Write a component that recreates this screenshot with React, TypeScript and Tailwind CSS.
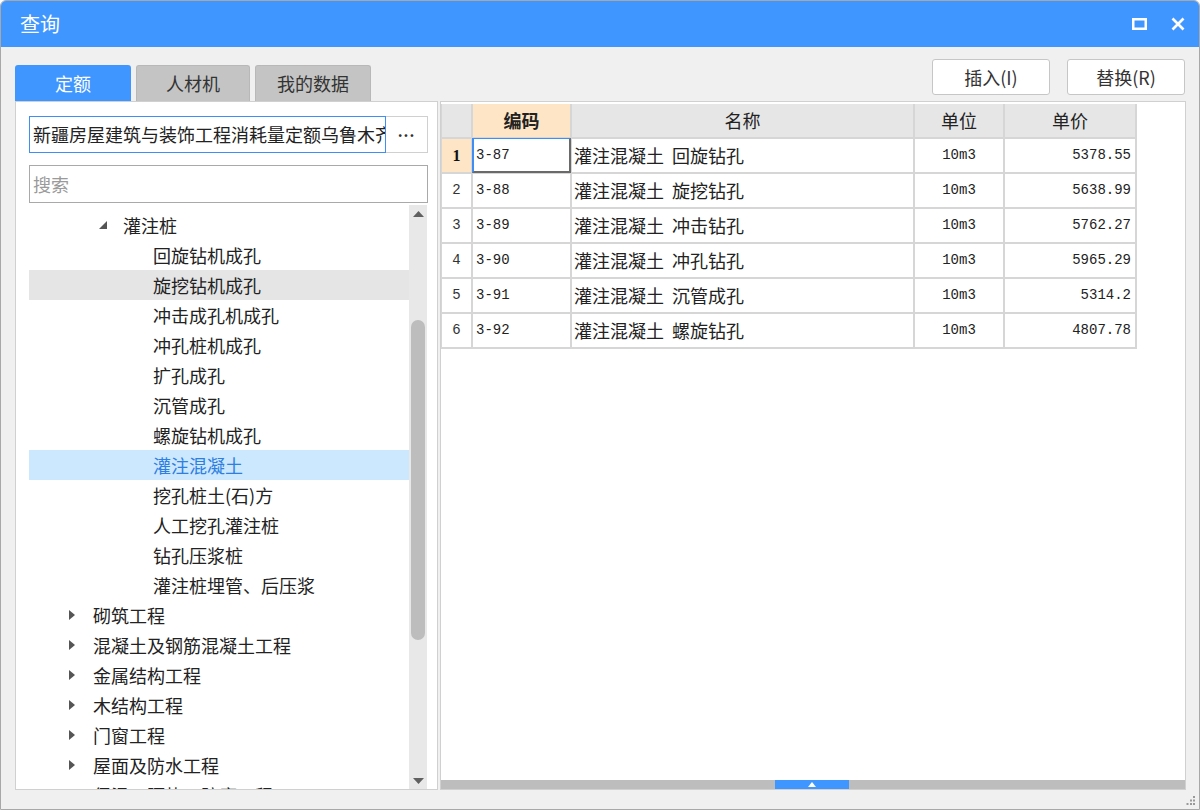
import React from "react";

const CJK = "font-['Microsoft_YaHei','Noto_Sans_CJK_SC',sans-serif]";
const CELL = "font-['Liberation_Mono','Noto_Sans_CJK_SC',monospace]";

type Node = { label: string; level: 0 | 1 | 2; expanded?: boolean; hover?: boolean; selected?: boolean };

const TREE: Node[] = [
  { label: "灌注桩", level: 1, expanded: true },
  { label: "回旋钻机成孔", level: 2 },
  { label: "旋挖钻机成孔", level: 2, hover: true },
  { label: "冲击成孔机成孔", level: 2 },
  { label: "冲孔桩机成孔", level: 2 },
  { label: "扩孔成孔", level: 2 },
  { label: "沉管成孔", level: 2 },
  { label: "螺旋钻机成孔", level: 2 },
  { label: "灌注混凝土", level: 2, selected: true },
  { label: "挖孔桩土(石)方", level: 2 },
  { label: "人工挖孔灌注桩", level: 2 },
  { label: "钻孔压浆桩", level: 2 },
  { label: "灌注桩埋管、后压浆", level: 2 },
  { label: "砌筑工程", level: 0 },
  { label: "混凝土及钢筋混凝土工程", level: 0 },
  { label: "金属结构工程", level: 0 },
  { label: "木结构工程", level: 0 },
  { label: "门窗工程", level: 0 },
  { label: "屋面及防水工程", level: 0 },
  { label: "保温、隔热、防腐工程", level: 0 },
];

const ROWS = [
  { code: "3-87", name: "灌注混凝土  回旋钻孔", unit: "10m3", price: "5378.55" },
  { code: "3-88", name: "灌注混凝土  旋挖钻孔", unit: "10m3", price: "5638.99" },
  { code: "3-89", name: "灌注混凝土  冲击钻孔", unit: "10m3", price: "5762.27" },
  { code: "3-90", name: "灌注混凝土  冲孔钻孔", unit: "10m3", price: "5965.29" },
  { code: "3-91", name: "灌注混凝土  沉管成孔", unit: "10m3", price: "5314.2" },
  { code: "3-92", name: "灌注混凝土  螺旋钻孔", unit: "10m3", price: "4807.78" },
];

function TreeRow({ node }: { node: Node }) {
  const bg = node.selected ? "bg-[#cce8ff]" : node.hover ? "bg-[#e5e5e5]" : "";
  const color = node.selected ? "text-[#2f7fe0]" : "text-[#222]";
  return (
    <div className={`h-[30px] shrink-0 flex items-center ${bg}`}>
      {node.level === 0 && (
        <>
          <div className="w-[52px] shrink-0 flex justify-end pr-[6px]">
            <svg width="6" height="10" viewBox="0 0 6 10">
              <path d="M0 0 L6 5 L0 10 Z" fill="#555" />
            </svg>
          </div>
          <span className={`text-[18px] ${color} whitespace-nowrap pl-[12px]`}>{node.label}</span>
        </>
      )}
      {node.level === 1 && (
        <>
          <div className="w-[80px] shrink-0 flex justify-end pr-[2px]">
            <svg width="8" height="8" viewBox="0 0 8 8">
              <path d="M8 0 L8 8 L0 8 Z" fill="#555" />
            </svg>
          </div>
          <span className={`text-[18px] ${color} whitespace-nowrap pl-[14px]`}>{node.label}</span>
        </>
      )}
      {node.level === 2 && (
        <span className={`text-[18px] ${color} whitespace-nowrap pl-[124px]`}>{node.label}</span>
      )}
    </div>
  );
}

export default function App() {
  return (
    <div className={`w-[1200px] h-[810px] flex flex-col bg-[#f0f0f0] border border-[#a8a8a8] rounded-t-[6px] overflow-hidden ${CJK}`}>
      {/* title bar */}
      <div className="h-[46px] shrink-0 bg-[#4096ff] flex items-center justify-between pl-[19px] pr-[14px]">
        <span className="text-white text-[20px]">查询</span>
        <div className="flex items-center gap-[24px]">
          <svg width="15" height="12" viewBox="0 0 15 12">
            <rect x="1.25" y="1.25" width="12.5" height="9.5" fill="none" stroke="white" strokeWidth="2.5" />
          </svg>
          <svg width="14" height="14" viewBox="0 0 14 14">
            <path d="M1.5 1.5 L12.5 12.5 M12.5 1.5 L1.5 12.5" stroke="white" strokeWidth="2.6" />
          </svg>
        </div>
      </div>

      {/* toolbar */}
      <div className="h-[54px] shrink-0 flex items-end justify-between px-[14px]">
        <div className="flex gap-[5px]">
          <div className="w-[116px] h-[36px] rounded-t-[3px] bg-[#4096ff] text-white text-[18px] flex items-center justify-center">定额</div>
          <div className="w-[114px] h-[36px] rounded-t-[3px] bg-[#c4c4c4] border border-b-0 border-[#b8b8b8] text-[#333] text-[18px] flex items-center justify-center">人材机</div>
          <div className="w-[116px] h-[36px] rounded-t-[3px] bg-[#c4c4c4] border border-b-0 border-[#b8b8b8] text-[#333] text-[18px] flex items-center justify-center">我的数据</div>
        </div>
        <div className="flex gap-[17px] mb-[6px]">
          <button className="w-[118px] h-[36px] bg-white border border-[#c6c6c6] rounded-[3px] text-[18px] text-[#333]">插入(I)</button>
          <button className="w-[118px] h-[36px] bg-white border border-[#c6c6c6] rounded-[3px] text-[18px] text-[#333]">替换(R)</button>
        </div>
      </div>

      {/* content */}
      <div className="h-[689px] shrink-0 flex gap-[2px] pl-[14px]">
        {/* left panel */}
        <div className="w-[423px] bg-white border border-[#d0d0d0] flex flex-col pt-[14px] pl-[13px] pr-[9px] overflow-hidden">
          <div className="h-[37px] shrink-0 flex">
            <div className="w-[357px] border border-[#3f8ef5] flex items-center pl-[3px] overflow-hidden">
              <span className="text-[18px] text-[#222] whitespace-nowrap">新疆房屋建筑与装饰工程消耗量定额乌鲁木齐</span>
            </div>
            <div className="flex-1 border border-l-0 border-[#d0d0d0] flex items-center justify-center">
              <span className="text-[#333] text-[15px] font-bold tracking-[1px] -mt-[6px]">...</span>
            </div>
          </div>
          <div className="h-[38px] shrink-0 mt-[12px] border border-[#a9a9a9] flex items-center pl-[3px]">
            <span className="text-[18px] text-[#9a9a9a]">搜索</span>
          </div>
          <div className="flex-1 flex mt-[2px] min-h-0">
            <div className="w-[380px] flex flex-col pt-[5px] overflow-hidden">
              {TREE.map((n, i) => (
                <TreeRow key={i} node={n} />
              ))}
            </div>
            <div className="w-[18px] bg-[#e8e8e8] flex flex-col items-center">
              <svg className="mt-[6px]" width="11" height="6" viewBox="0 0 11 6">
                <path d="M0 6 L5.5 0 L11 6 Z" fill="#606060" />
              </svg>
              <div className="w-[14px] h-[320px] mt-[103px] rounded-full bg-[#bdbdbd]" />
              <div className="flex-1" />
              <svg className="mb-[5px]" width="11" height="6" viewBox="0 0 11 6">
                <path d="M0 0 L11 0 L5.5 6 Z" fill="#606060" />
              </svg>
            </div>
          </div>
        </div>

        {/* right panel */}
        <div className="w-[746px] bg-white border border-[#d0d0d0] flex flex-col pt-[2px]">
          <div className={`flex flex-col ${CELL}`}>
            <div className="flex h-[35px] border-l border-[#d6d6d6]">
              <div className="w-[31px] bg-[#e6e6e6] border-r-2 border-b-2 border-[#d6d6d6]" />
              <div className={`w-[99px] bg-[#fde5c6] border-r-2 border-b-2 border-[#d6d6d6] flex items-center justify-center text-[18px] font-bold text-[#222] ${CJK}`}>编码</div>
              <div className={`w-[343px] bg-[#e6e6e6] border-r-2 border-b-2 border-[#d6d6d6] flex items-center justify-center text-[18px] text-[#222] ${CJK}`}>名称</div>
              <div className={`w-[90px] bg-[#e6e6e6] border-r-2 border-b-2 border-[#d6d6d6] flex items-center justify-center text-[18px] text-[#222] ${CJK}`}>单位</div>
              <div className={`w-[132px] bg-[#e6e6e6] border-r-2 border-b-2 border-[#d6d6d6] flex items-center justify-center text-[18px] text-[#222] ${CJK}`}>单价</div>
            </div>
            {ROWS.map((r, i) => (
              <div key={i} className="flex h-[35px] border-l border-[#d6d6d6]">
                <div
                  className={`w-[31px] border-r-2 border-b-2 border-[#d6d6d6] flex items-center justify-center ${
                    i === 0 ? "bg-[#fde5c6] font-bold text-[16px] font-['Liberation_Serif',serif] text-[#111]" : "text-[14px] text-[#333]"
                  }`}
                >
                  {i + 1}
                </div>
                <div className="w-[99px] border-r-2 border-b-2 border-[#d6d6d6] relative flex items-center pl-[3px] text-[14px] text-[#222]">
                  {i === 0 && (
                    <div className="absolute -left-[1px] -top-[1px] w-[99px] h-[35px] border-l-2 border-t border-[#3f8ef5] border-r-2 border-b-2 border-r-[#6a6a6a] border-b-[#6a6a6a]" />
                  )}
                  {r.code}
                </div>
                <div className={`w-[343px] border-r-2 border-b-2 border-[#d6d6d6] flex items-center pl-[2px] text-[18px] text-[#222] whitespace-pre ${CJK}`}>
                  {r.name}
                </div>
                <div className="w-[90px] border-r-2 border-b-2 border-[#d6d6d6] flex items-center justify-center text-[14px] text-[#222]">
                  {r.unit}
                </div>
                <div className="w-[132px] border-r-2 border-b-2 border-[#d6d6d6] flex items-center justify-end pr-[4px] text-[14px] text-[#222]">
                  {r.price}
                </div>
              </div>
            ))}
          </div>
          <div className="flex-1" />
          <div className="h-[9px] shrink-0 bg-[#bdbdbd] flex">
            <div className="w-[334px]" />
            <div className="w-[74px] bg-[#4096ff] flex items-center justify-center">
              <svg width="8" height="5" viewBox="0 0 8 5">
                <path d="M0 5 L4 0 L8 5 Z" fill="white" />
              </svg>
            </div>
          </div>
        </div>
      </div>

      {/* status / resize grip */}
      <div className="flex-1 flex items-end justify-end pr-[3px] pb-[3px]">
        <svg width="10" height="10" viewBox="0 0 10 10">
          <rect x="7" y="0" width="2" height="2" fill="#999" />
          <rect x="4" y="3.5" width="2" height="2" fill="#999" />
          <rect x="7" y="3.5" width="2" height="2" fill="#999" />
          <rect x="0.5" y="7" width="2" height="2" fill="#999" />
          <rect x="4" y="7" width="2" height="2" fill="#999" />
          <rect x="7" y="7" width="2" height="2" fill="#999" />
        </svg>
      </div>
    </div>
  );
}
